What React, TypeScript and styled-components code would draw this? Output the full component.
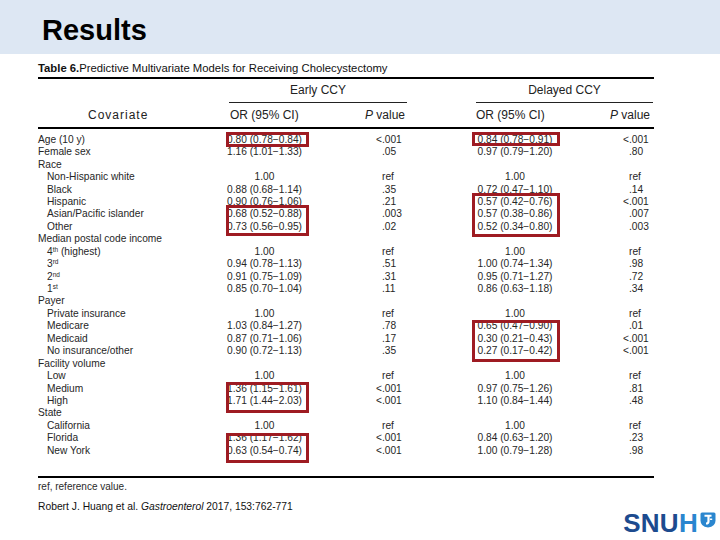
import styled, { createGlobalStyle } from 'styled-components'

const ROW_H = 12.44
const COLS = '188px 139px 111px 132px 46px'

type Cell = [string, string]
interface Row {
  label: string
  sup?: string
  rest?: string
  indent?: boolean
  early?: Cell
  delayed?: Cell
}
interface Mark {
  col: 'early' | 'delayed'
  start: number
  span: number
  dy: number
  dh: number
}

const ROWS: Row[] = [
  { label: 'Age (10 y)', early: ['0.80 (0.78−0.84)', '<.001'], delayed: ['0.84 (0.78−0.91)', '<.001'] },
  { label: 'Female sex', early: ['1.16 (1.01−1.33)', '.05'], delayed: ['0.97 (0.79−1.20)', '.80'] },
  { label: 'Race' },
  { label: 'Non-Hispanic white', indent: true, early: ['1.00', 'ref'], delayed: ['1.00', 'ref'] },
  { label: 'Black', indent: true, early: ['0.88 (0.68−1.14)', '.35'], delayed: ['0.72 (0.47−1.10)', '.14'] },
  { label: 'Hispanic', indent: true, early: ['0.90 (0.76−1.06)', '.21'], delayed: ['0.57 (0.42−0.76)', '<.001'] },
  { label: 'Asian/Pacific islander', indent: true, early: ['0.68 (0.52−0.88)', '.003'], delayed: ['0.57 (0.38−0.86)', '.007'] },
  { label: 'Other', indent: true, early: ['0.73 (0.56−0.95)', '.02'], delayed: ['0.52 (0.34−0.80)', '.003'] },
  { label: 'Median postal code income' },
  { label: '4', sup: 'th', rest: ' (highest)', indent: true, early: ['1.00', 'ref'], delayed: ['1.00', 'ref'] },
  { label: '3', sup: 'rd', indent: true, early: ['0.94 (0.78−1.13)', '.51'], delayed: ['1.00 (0.74−1.34)', '.98'] },
  { label: '2', sup: 'nd', indent: true, early: ['0.91 (0.75−1.09)', '.31'], delayed: ['0.95 (0.71−1.27)', '.72'] },
  { label: '1', sup: 'st', indent: true, early: ['0.85 (0.70−1.04)', '.11'], delayed: ['0.86 (0.63−1.18)', '.34'] },
  { label: 'Payer' },
  { label: 'Private insurance', indent: true, early: ['1.00', 'ref'], delayed: ['1.00', 'ref'] },
  { label: 'Medicare', indent: true, early: ['1.03 (0.84−1.27)', '.78'], delayed: ['0.65 (0.47−0.90)', '.01'] },
  { label: 'Medicaid', indent: true, early: ['0.87 (0.71−1.06)', '.17'], delayed: ['0.30 (0.21−0.43)', '<.001'] },
  { label: 'No insurance/other', indent: true, early: ['0.90 (0.72−1.13)', '.35'], delayed: ['0.27 (0.17−0.42)', '<.001'] },
  { label: 'Facility volume' },
  { label: 'Low', indent: true, early: ['1.00', 'ref'], delayed: ['1.00', 'ref'] },
  { label: 'Medium', indent: true, early: ['1.36 (1.15−1.61)', '<.001'], delayed: ['0.97 (0.75−1.26)', '.81'] },
  { label: 'High', indent: true, early: ['1.71 (1.44−2.03)', '<.001'], delayed: ['1.10 (0.84−1.44)', '.48'] },
  { label: 'State' },
  { label: 'California', indent: true, early: ['1.00', 'ref'], delayed: ['1.00', 'ref'] },
  { label: 'Florida', indent: true, early: ['1.36 (1.17−1.62)', '<.001'], delayed: ['0.84 (0.63−1.20)', '.23'] },
  { label: 'New York', indent: true, early: ['0.63 (0.54−0.74)', '<.001'], delayed: ['1.00 (0.79−1.28)', '.98'] },
]

// red highlight boxes drawn over the table (row index based)
const MARKS: Mark[] = [
  { col: 'early', start: 0, span: 1, dy: -1.8, dh: 2.6 },
  { col: 'delayed', start: 0, span: 1, dy: -1.8, dh: 1.6 },
  { col: 'early', start: 6, span: 2, dy: -3.4, dh: 6 },
  { col: 'delayed', start: 5, span: 3, dy: -3, dh: 6.7 },
  { col: 'delayed', start: 15, span: 3, dy: -0.4, dh: 4.7 },
  { col: 'early', start: 20, span: 2, dy: -0.6, dh: 6 },
  { col: 'early', start: 24, span: 2, dy: 0.6, dh: 5 },
]

const GlobalStyle = createGlobalStyle`
  html, body {
    margin: 0;
    padding: 0;
    background: #fff;
  }
  body {
    font-family: 'Liberation Sans', Arial, sans-serif;
    color: #1e1e1e;
  }
`

const Slide = styled.div`
  width: 720px;
  height: 540px;
  overflow: hidden;
  display: flex;
  flex-direction: column;
`

const Header = styled.header`
  height: 54px;
  flex: none;
  background: #dde7f3;
  box-sizing: border-box;
  padding: 14px 0 0 42px;
  font-size: 29px;
  line-height: 32px;
  font-weight: 700;
  color: #000;
`

const Content = styled.main`
  padding-left: 38px;
  display: flex;
  flex-direction: column;
`

const Caption = styled.div`
  margin-top: 7.5px;
  font-size: 11.3px;
  line-height: 13px;
  color: #111;
  b {
    font-weight: 700;
  }
`

const Rule = styled.div<{ $top: number }>`
  width: 616px;
  height: 2px;
  margin-top: ${(p) => p.$top}px;
  background: #000;
`

const HeadGrid = styled.div<{ $h: number }>`
  display: grid;
  grid-template-columns: ${COLS};
  height: ${(p) => p.$h}px;
  font-size: 12px;
  line-height: 13px;
  color: #222;
`

const Spanner = styled.div<{ $col: string; $ml: number; $mr: number }>`
  grid-column: ${(p) => p.$col};
  margin: 0 ${(p) => p.$mr}px 0 ${(p) => p.$ml}px;
  align-self: end;
  border-bottom: 1px solid #222;
  padding-bottom: 5px;
  text-align: center;
`

const HeadCell = styled.div<{ $pad?: number; $spacing?: number }>`
  align-self: center;
  padding-left: ${(p) => p.$pad ?? 0}px;
  letter-spacing: ${(p) => p.$spacing ?? 0}px;
  white-space: nowrap;
  i {
    font-style: italic;
  }
`

const Body = styled.div`
  position: relative;
  margin-top: 4.8px;
`

const TableRow = styled.div`
  display: grid;
  grid-template-columns: ${COLS};
  height: ${ROW_H}px;
  line-height: ${ROW_H}px;
  font-size: 10.2px;
  color: #262626;
  white-space: nowrap;
  sup {
    font-size: 6.5px;
    line-height: 0;
    vertical-align: 3.5px;
  }
`

const Label = styled.div<{ $indent?: boolean }>`
  padding-left: ${(p) => (p.$indent ? 9 : 0)}px;
`

const OddsCell = styled.div`
  display: flex;
`

const Odds = styled.span<{ $w: number }>`
  display: inline-block;
  width: ${(p) => p.$w}px;
  text-align: center;
`

const PCell = styled.div<{ $pad: number }>`
  padding-left: ${(p) => p.$pad}px;
`

const Less = styled.span`
  margin-left: -6px;
`

const Highlight = styled.div<{ $left: number; $width: number; $top: number; $height: number }>`
  position: absolute;
  left: ${(p) => p.$left}px;
  top: ${(p) => p.$top}px;
  width: ${(p) => p.$width}px;
  height: ${(p) => p.$height}px;
  box-sizing: border-box;
  border: 3px solid #9e1b22;
  pointer-events: none;
`

const Note = styled.div`
  margin-top: 3px;
  font-size: 10px;
  line-height: 12px;
  color: #2a2a2a;
`

const Bottom = styled.div`
  display: flex;
  justify-content: space-between;
  align-items: flex-start;
  padding: 0 4px 0 38px;
  margin-top: 8px;
`

const Citation = styled.div`
  font-size: 10.3px;
  line-height: 12px;
  color: #111;
  i {
    font-style: italic;
  }
`

const Logo = styled.div`
  margin-top: 9px;
  display: flex;
  align-items: flex-start;
  gap: 2px;
`

const LogoText = styled.span`
  font-size: 26px;
  line-height: 26px;
  font-weight: 700;
  letter-spacing: 0.3px;
  color: #1d4b8f;
`

const LogoH = styled.span`
  color: #2a86cf;
`

const EmblemSvg = styled.svg`
  margin-top: 2px;
`

function Emblem() {
  return (
    <EmblemSvg width="16" height="16" viewBox="0 0 16 16">
      <path d="M0.5 2 Q0.5 0.5 2 0.5 H14 Q15.5 0.5 15.5 2 V8.5 Q15.5 14.5 8 15.5 Q0.5 14.5 0.5 8.5 Z" fill="#2a86cf" />
      <path d="M4.5 2.8 H11.5 V4.8 H9.6 V9.2 Q9.6 12.6 6 12.6 V10.6 Q7.4 10.6 7.4 9.2 V4.8 H4.5 Z" fill="#fff" />
      <rect x="10" y="6.5" width="2.2" height="1.5" fill="#fff" />
    </EmblemSvg>
  )
}

function PValue({ value, pad }: { value: string; pad: number }) {
  if (value.startsWith('<')) {
    return (
      <PCell $pad={pad}>
        <Less>&lt;</Less>
        {value.slice(1)}
      </PCell>
    )
  }
  return <PCell $pad={pad}>{value}</PCell>
}

export default function App() {
  return (
    <Slide>
      <GlobalStyle />
      <Header>Results</Header>
      <Content>
        <Caption>
          <b>Table 6.</b>Predictive Multivariate Models for Receiving Cholecystectomy
        </Caption>
        <Rule $top={2.5} />
        <HeadGrid $h={24}>
          <Spanner $col="2 / 4" $ml={3} $mr={69}>
            Early CCY
          </Spanner>
          <Spanner $col="4 / 6" $ml={0} $mr={1}>
            Delayed CCY
          </Spanner>
        </HeadGrid>
        <HeadGrid $h={24}>
          <HeadCell $pad={50} $spacing={1}>
            Covariate
          </HeadCell>
          <HeadCell $pad={4}>OR (95% CI)</HeadCell>
          <HeadCell>
            <i>P</i> value
          </HeadCell>
          <HeadCell $pad={0}>OR (95% CI)</HeadCell>
          <HeadCell $pad={2}>
            <i>P</i> value
          </HeadCell>
        </HeadGrid>
        <Rule $top={0} />
        <Body>
          {ROWS.map((r, i) => (
            <TableRow key={i}>
              <Label $indent={r.indent}>
                {r.label}
                {r.sup && <sup>{r.sup}</sup>}
                {r.rest}
              </Label>
              <OddsCell>{r.early && <Odds $w={77}>{r.early[0]}</Odds>}</OddsCell>
              {r.early ? <PValue value={r.early[1]} pad={17} /> : <div />}
              <OddsCell>{r.delayed && <Odds $w={78}>{r.delayed[0]}</Odds>}</OddsCell>
              {r.delayed ? <PValue value={r.delayed[1]} pad={21} /> : <div />}
            </TableRow>
          ))}
          {MARKS.map((m, i) => (
            <Highlight
              key={i}
              $left={m.col === 'early' ? 188 : 434}
              $width={m.col === 'early' ? 83 : 88}
              $top={m.start * ROW_H + m.dy}
              $height={m.span * ROW_H + m.dh}
            />
          ))}
        </Body>
        <Rule $top={18.8} />
        <Note>ref, reference value.</Note>
      </Content>
      <Bottom>
        <Citation>
          Robert J. Huang et al. <i>Gastroenterol</i> 2017, 153:762-771
        </Citation>
        <Logo>
          <LogoText>
            SNU<LogoH>H</LogoH>
          </LogoText>
          <Emblem />
        </Logo>
      </Bottom>
    </Slide>
  )
}
